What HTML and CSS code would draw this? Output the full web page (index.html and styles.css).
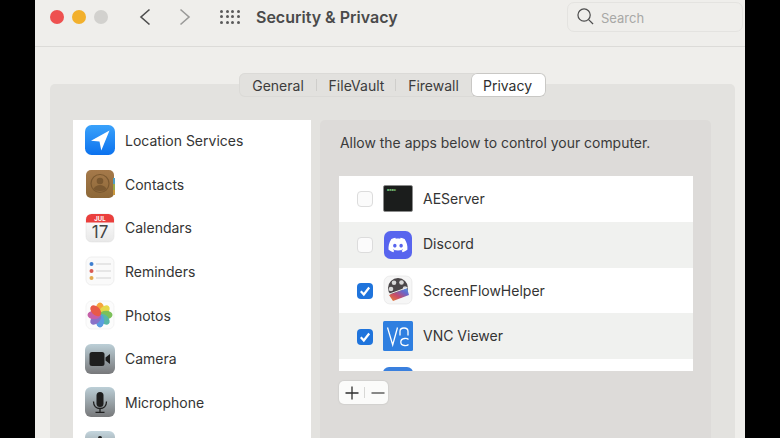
FILE: index.html
```html
<!DOCTYPE html>
<html lang="en">
<head>
<meta charset="utf-8">
<title>Security &amp; Privacy</title>
<link rel="stylesheet" href="styles.css">
</head>
<body>
<div class="window">
  <header class="titlebar">
    <div class="lights">
      <span class="light red"></span><span class="light yellow"></span><span class="light grey"></span>
    </div>
    <svg class="nav back" viewBox="0 0 12 18"><path d="M10.500 1.500 2 9l8.500 7.500"/></svg>
    <svg class="nav forward" viewBox="0 0 12 18"><path d="M1.500 1.500 10 9l-8.500 7.500"/></svg>
    <div class="grid-btn"><i></i><i></i><i></i><i></i><i></i><i></i><i></i><i></i><i></i><i></i><i></i><i></i></div>
    <h1 class="title">Security &amp; Privacy</h1>
    <div class="search">
      <svg class="glass" viewBox="0 0 18 18"><circle cx="7.500" cy="7.500" r="6.500"/><path d="m12.300 12.300 4.700 4.700"/></svg>
      <span class="search-text">Search</span>
    </div>
  </header>

  <main class="content">
    <nav class="tabs">
      <span class="tab t1">General</span><span class="tab t2">FileVault</span><span class="tab t3">Firewall</span><span class="tab active">Privacy</span>
    </nav>
    <section class="panel">
      <ul class="sidebar">
        <li class="side-row">
          <svg class="side-icon" viewBox="0 0 30 30"><defs><linearGradient id="g1" x1="0" y1="0" x2="0" y2="1"><stop offset="0" stop-color="#3aa2fb"/><stop offset="1" stop-color="#0c72ee"/></linearGradient></defs><rect width="30" height="30" rx="6.500" fill="url(#g1)"/><path d="M24.500 5.500 6 15.800l8.500.8 1.800 8.900z" fill="#fff"/></svg>
          <span>Location Services</span>
        </li>
        <li class="side-row">
          <svg class="side-icon" viewBox="0 0 30 30"><defs><linearGradient id="g2" x1="0" y1="0" x2="0" y2="1"><stop offset="0" stop-color="#a5794a"/><stop offset="1" stop-color="#8d6838"/></linearGradient></defs><rect x="1" y="1" width="28" height="28" rx="5" fill="url(#g2)"/><rect x="28" y="9" width="2" height="6" fill="#4f9fc4"/><rect x="28" y="15" width="2" height="6" fill="#98a84a"/><rect x="28" y="21" width="2" height="5" fill="#c9983c"/><circle cx="15" cy="14.500" r="9" fill="none" stroke="#7a5830" stroke-width="1.200"/><circle cx="15" cy="12" r="3.300" fill="#7a5830"/><path d="M8.500 20c1.500-3 4-4 6.500-4s5 1 6.500 4c-2 2.500-11 2.500-13 0z" fill="#7a5830"/></svg>
          <span>Contacts</span>
        </li>
        <li class="side-row">
          <svg class="side-icon" viewBox="0 0 30 30"><defs><linearGradient id="g3" x1="0" y1="0" x2="0" y2="1"><stop offset="0" stop-color="#fff"/><stop offset="1" stop-color="#e8e8e8"/></linearGradient></defs><rect x="1" y="1" width="28" height="28" rx="5.500" fill="url(#g3)" stroke="#dfdfdf" stroke-width=".5"/><path d="M1 9.500V6.500A5.500 5.500 0 0 1 6.500 1h17A5.500 5.500 0 0 1 29 6.500v3z" fill="#ea3f3d"/><text x="15" y="7.500" class="cal-month">JUL</text><text x="15" y="25" class="cal-day">17</text></svg>
          <span>Calendars</span>
        </li>
        <li class="side-row">
          <svg class="side-icon" viewBox="0 0 30 30"><rect x="1" y="1" width="28" height="28" rx="5.500" fill="#fafafa" stroke="#e6e6e6" stroke-width=".6"/><circle cx="6.500" cy="8" r="2" fill="#3f7fd0"/><circle cx="6.500" cy="15" r="2" fill="#d85a52"/><circle cx="6.500" cy="22" r="2" fill="#e2a94e"/><path d="M11 8h15M11 15h15M11 22h15" stroke="#d2d2d2" stroke-width="1"/></svg>
          <span>Reminders</span>
        </li>
        <li class="side-row">
          <svg class="side-icon" viewBox="0 0 30 30"><rect x="1" y="1" width="28" height="28" rx="5.500" fill="#fcfcfc" stroke="#ececec" stroke-width=".6"/><g><ellipse cx="15" cy="9" rx="4.200" ry="6.500" fill="#f5a53c"/><ellipse cx="15" cy="9" rx="4.200" ry="6.500" fill="#e6d84a" transform="rotate(45 15 15)"/><ellipse cx="15" cy="9" rx="4.200" ry="6.500" fill="#7cc05a" transform="rotate(90 15 15)"/><ellipse cx="15" cy="9" rx="4.200" ry="6.500" fill="#57b7a8" transform="rotate(135 15 15)"/><ellipse cx="15" cy="9" rx="4.200" ry="6.500" fill="#5a9be0" transform="rotate(180 15 15)"/><ellipse cx="15" cy="9" rx="4.200" ry="6.500" fill="#8a72c8" transform="rotate(225 15 15)"/><ellipse cx="15" cy="9" rx="4.200" ry="6.500" fill="#c55fa8" transform="rotate(270 15 15)"/><ellipse cx="15" cy="9" rx="4.200" ry="6.500" fill="#e85a48" transform="rotate(315 15 15)"/></g></svg>
          <span>Photos</span>
        </li>
        <li class="side-row">
          <svg class="side-icon" viewBox="0 0 30 30"><defs><linearGradient id="g6" x1="0" y1="0" x2="0" y2="1"><stop offset="0" stop-color="#bccfd7"/><stop offset="1" stop-color="#77787a"/></linearGradient></defs><rect width="30" height="30" rx="6" fill="url(#g6)"/><rect x="4.500" y="8" width="15" height="14" rx="2.500" fill="#1e1e1e"/><path d="m20.500 13.500 4.500-3.500v10l-4.500-3.500z" fill="#1e1e1e"/></svg>
          <span>Camera</span>
        </li>
        <li class="side-row">
          <svg class="side-icon" viewBox="0 0 30 30"><defs><linearGradient id="g7" x1="0" y1="0" x2="0" y2="1"><stop offset="0" stop-color="#bccfd7"/><stop offset="1" stop-color="#77787a"/></linearGradient></defs><rect width="30" height="30" rx="6" fill="url(#g7)"/><rect x="11.500" y="5" width="7" height="15" rx="3.500" fill="#1e1e1e"/><path d="M8.500 14.500c0 4.500 3 7 6.500 7s6.500-2.500 6.500-7M15 21.500v3.500M10.500 25.300h9" fill="none" stroke="#1e1e1e" stroke-width="1.300"/></svg>
          <span>Microphone</span>
        </li>
        <li class="side-row">
          <svg class="side-icon" viewBox="0 0 30 30"><defs><linearGradient id="g8" x1="0" y1="0" x2="0" y2="1"><stop offset="0" stop-color="#c4d6de"/><stop offset="1" stop-color="#77787a"/></linearGradient></defs><rect width="30" height="30" rx="6" fill="url(#g8)"/><circle cx="15" cy="7" r="2" fill="#1e1e1e"/></svg>
        </li>
      </ul>

      <div class="detail">
        <p class="prompt">Allow the apps below to control your computer.</p>
        <ul class="apps">
          <li class="app-row">
            <span class="check"></span>
            <svg class="app-icon" viewBox="0 0 30 30"><rect x=".5" y="1.500" width="29" height="26" rx="1.500" fill="#1b1d1c" stroke="#8c8c8c" stroke-width=".8"/><text x="4" y="7" class="exec">exec</text></svg>
            <span>AEServer</span>
          </li>
          <li class="app-row alt">
            <span class="check"></span>
            <svg class="app-icon" viewBox="0 0 30 30"><rect x="1" y="1" width="28" height="28" rx="6.500" fill="#5865ee"/><g transform="translate(5.500 5.500) scale(.79)"><path fill="#fff" d="M20.317 4.3698a19.7913 19.7913 0 00-4.8851-1.5152.0741.0741 0 00-.0785.0371c-.211.3753-.4447.8648-.6083 1.2495-1.8447-.2762-3.68-.2762-5.4868 0-.1636-.3933-.4058-.8742-.6177-1.2495a.077.077 0 00-.0785-.037 19.7363 19.7363 0 00-4.8852 1.515.0699.0699 0 00-.0321.0277C.5334 9.0458-.319 13.5799.0992 18.0578a.0824.0824 0 00.0312.0561c2.0528 1.5076 4.0413 2.4228 5.9929 3.0294a.0777.0777 0 00.0842-.0276c.4616-.6304.8731-1.2952 1.226-1.9942a.076.076 0 00-.0416-.1057c-.6528-.2476-1.2743-.5495-1.8722-.8923a.077.077 0 01-.0076-.1277c.1258-.0943.2517-.1923.3718-.2914a.0743.0743 0 01.0776-.0105c3.9278 1.7933 8.18 1.7933 12.0614 0a.0739.0739 0 01.0785.0095c.1202.099.246.1981.3728.2924a.077.077 0 01-.0066.1276 12.2986 12.2986 0 01-1.873.8914.0766.0766 0 00-.0407.1067c.3604.698.7719 1.3628 1.225 1.9932a.076.076 0 00.0842.0286c1.961-.6067 3.9495-1.5219 6.0023-3.0294a.077.077 0 00.0313-.0552c.5004-5.177-.8382-9.6739-3.5485-13.6604a.061.061 0 00-.0312-.0286zM8.02 15.3312c-1.1825 0-2.1569-1.0857-2.1569-2.419 0-1.3332.9555-2.4189 2.157-2.4189 1.2108 0 2.1757 1.0952 2.1568 2.419 0 1.3332-.9555 2.4189-2.1569 2.4189zm7.9748 0c-1.1825 0-2.1569-1.0857-2.1569-2.419 0-1.3332.9554-2.4189 2.1569-2.4189 1.2108 0 2.1757 1.0952 2.1568 2.419 0 1.3332-.946 2.4189-2.1568 2.4189Z"/></g></svg>
            <span class="alt-label">Discord</span>
          </li>
          <li class="app-row">
            <span class="check on"><svg viewBox="0 0 16 16"><path d="M3.800 8.300 6.800 11.500 12.200 4.500"/></svg></span>
            <svg class="app-icon" viewBox="0 0 30 30"><defs><linearGradient id="sf" x1="0" y1="1" x2="1" y2="0"><stop offset="0" stop-color="#e8862c"/><stop offset=".4" stop-color="#c84c6a"/><stop offset=".7" stop-color="#6c66c8"/><stop offset="1" stop-color="#4a9ae0"/></linearGradient></defs><rect x="1" y="1" width="28" height="28" rx="6" fill="#f6f6f6" stroke="#e2e2e2" stroke-width=".6"/><circle cx="15" cy="13" r="10" fill="#4a4648"/><circle cx="11" cy="7.800" r="2.300" fill="#d8d8d8"/><circle cx="18.500" cy="7.500" r="2.300" fill="#d8d8d8"/><circle cx="22" cy="13.500" r="2.300" fill="#d8d8d8"/><circle cx="8" cy="14" r="2.300" fill="#d8d8d8"/><path d="M6 20 24 13l2 7-16 6z" fill="url(#sf)"/><path d="M5 19.500 24.500 12.500" stroke="#eee" stroke-width="1"/></svg>
            <span>ScreenFlowHelper</span>
          </li>
          <li class="app-row alt">
            <span class="check on"><svg viewBox="0 0 16 16"><path d="M3.800 8.300 6.800 11.500 12.200 4.500"/></svg></span>
            <svg class="app-icon" viewBox="0 0 30 30"><rect width="30" height="30" rx="1.500" fill="#2f7fe0"/><path d="M4.500 6.500 9.700 24 14.500 6.500M17 14.500V10.500C17 8 18.800 7 21 7s4 1 4 3.500v4M25.500 18.500C24.500 17.500 23 17.300 21.500 17.500 19 17.800 17.800 19 17.800 21s1.200 3.300 3.700 3.500c1.500.1 3 0 4-1" fill="none" stroke="#fff" stroke-width="1.300"/></svg>
            <span class="alt-label">VNC Viewer</span>
          </li>
          <li class="app-row">
            <span class="check-blank"></span>
            <svg class="app-icon" viewBox="0 0 30 30"><rect width="30" height="30" rx="6" fill="#3a80de"/></svg>
          </li>
        </ul>
        <div class="addremove">
          <span class="ar-btn"><svg viewBox="0 0 14 14"><path d="M7 .5v13M.5 7h13"/></svg></span>
          <span class="ar-btn minus"><svg viewBox="0 0 14 14"><path d="M.5 7h13"/></svg></span>
        </div>
      </div>
    </section>
  </main>
</div>
</body>
</html>
```
FILE: styles.css
```css
* { box-sizing: border-box; }
html, body { margin: 0; padding: 0; height: 100%; background: #000; overflow: hidden; }
body { font-family: Inter, "Liberation Sans", sans-serif; color: #343434; font-size: 14px; }
ul { list-style: none; margin: 0; padding: 0; }

.window { width: 710px; height: 438px; margin-left: 35px; background: #efeeeb; overflow: hidden; }

.titlebar { height: 47px; padding: 0 2px 13px 15px; border-bottom: 1px solid #dcdbd8; display: flex; align-items: center; }
.lights { display: flex; gap: 8px; }
.light { width: 14px; height: 14px; border-radius: 50%; }
.red { background: #ee5150; }
.yellow { background: #f2b02c; }
.grey { background: #d2d1ce; }

.nav { width: 12px; height: 18px; fill: none; stroke-width: 1.600; }
.back { margin-left: 31px; stroke: #4d4d4d; }
.forward { margin-left: 28px; stroke: #9a9a98; }

.grid-btn { margin-left: 29px; width: 20px; display: grid; grid-template-columns: repeat(4, 3px); grid-auto-rows: 3px; justify-content: space-between; row-gap: 2.500px; }
.grid-btn i { background: #5a5a5a; border-radius: 50%; }

.title { margin: 0 0 0 16px; font-size: 16px; font-weight: 600; color: #4a4a4a; white-space: nowrap; }

.search { margin-left: auto; width: 176px; height: 30px; border: 1px solid #e4e3e0; border-radius: 7px; display: flex; align-items: center; padding-left: 9px; gap: 7px; color: #a8a8a6; font-size: 13px; }
.search-text { padding-top: 2px; }
.glass { width: 17px; height: 17px; fill: none; stroke: #4e4e4e; stroke-width: 1.300; }

.content { padding: 26px 10px 0 15px; }

.tabs { display: flex; width: 307px; height: 24px; margin: 0 0 -13px 189px; background: #e2e1de; border-radius: 6px; box-shadow: inset 0 0 0 1px #dbdad7; position: relative; z-index: 1; align-items: center; }
.tab { height: 100%; display: flex; align-items: center; justify-content: center; color: #3c3c3c; }
.t1 { width: 78px; }
.t2 { width: 79px; }
.t3 { width: 75px; }
.t1, .t2 { position: relative; }
.t1::after, .t2::after { content: ""; position: absolute; right: 0; top: 6px; height: 12px; width: 1px; background: #cfcecb; }
.active { width: 75px; padding-right: 2px; background: #fff; border-radius: 6px; box-shadow: inset 0 0 0 1px #c9c8c5; color: #2e2e2e; }

.panel { height: 420px; padding: 36px 24px 0 23px; background: #e3e2df; border-radius: 5px; display: flex; gap: 9px; align-items: flex-start; }

.sidebar { width: 238px; height: 340px; flex: none; background: #fff; padding-left: 12px; overflow: hidden; }
.side-row { height: 43.670px; display: flex; align-items: center; gap: 10px; }
.side-row:first-child { margin-top: -1.400px; }
.side-icon { width: 30px; height: 30px; flex: none; }

.cal-month { font: 700 6px Inter, sans-serif; fill: #fff; text-anchor: middle; }
.cal-day { font: 400 17px Inter, sans-serif; fill: #444; text-anchor: middle; }
.exec { font: 700 3.800px "DejaVu Sans Mono", monospace; fill: #8fe08f; }

.detail { width: 391px; height: 340px; flex: none; background: #dddbd9; border-radius: 5px; padding: 0 18px 0 19px; }
.prompt { margin: 0; height: 56px; padding: 14px 0 0 1px; line-height: 17px; font-size: 13.950px; color: #3a3a3a; }

.apps { height: 195px; background: #fff; overflow: hidden; }
.app-row { height: 45.750px; display: flex; align-items: center; padding-left: 18px; background: #fff; }
.alt { background: #f0f1ef; }
.alt-label { margin-top: -2px; }
.check, .check-blank { width: 16px; height: 16px; flex: none; border-radius: 4px; margin-right: 10px; }
.check { background: #fbfbfb; border: 1px solid #dcdcdc; }
.check.on { background: #1f74dc; border: 0; display: flex; margin-top: 1px; }
.check svg { width: 16px; height: 16px; fill: none; stroke: #fff; stroke-width: 2.200; }
.app-icon { width: 30px; height: 30px; flex: none; margin-right: 10px; }

.addremove { margin-top: 10px; width: 49px; height: 23px; background: #fbfbfa; border-radius: 5px; box-shadow: 0 0 1px 1px #d2d1cf; display: flex; align-items: center; }
.ar-btn { width: 25px; height: 100%; display: flex; align-items: center; justify-content: center; position: relative; }
.ar-btn svg { width: 14px; height: 14px; fill: none; stroke: #2e2e2e; stroke-width: 1.300; }
.minus { width: 24px; padding-left: 3px; }
.minus svg { stroke: #4a4a4a; }
.minus::before { content: ""; position: absolute; left: 0; top: 6px; height: 11px; width: 1px; background: #d8d8d6; }
```
